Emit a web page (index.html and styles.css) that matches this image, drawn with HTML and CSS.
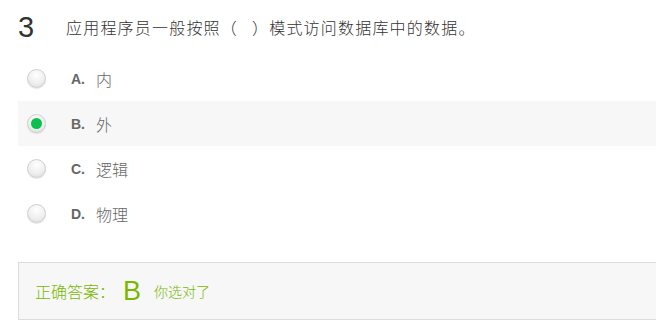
FILE: index.html
```html
<!DOCTYPE html>
<html lang="zh-CN">
<head>
<meta charset="utf-8">
<link rel="stylesheet" href="styles.css">
</head>
<body>
<div class="question">
  <div class="q-head">
    <span class="q-num">3</span>
    <span class="q-text">应用程序员一般按照（<span class="gap"></span>）模式访问数据库中的数据。</span>
  </div>
  <ul class="options">
    <li class="option"><span class="radio"></span><span class="letter">A.</span><span class="opt-text">内</span></li>
    <li class="option selected"><span class="radio checked"></span><span class="letter">B.</span><span class="opt-text">外</span></li>
    <li class="option"><span class="radio"></span><span class="letter">C.</span><span class="opt-text">逻辑</span></li>
    <li class="option"><span class="radio"></span><span class="letter">D.</span><span class="opt-text">物理</span></li>
  </ul>
  <div class="answer">
    <span class="ans-label">正确答案：</span><span class="ans-key">B</span><span class="ans-note">你选对了</span>
  </div>
</div>
</body>
</html>
```
FILE: styles.css
```css
html, body {
  margin: 0;
  padding: 0;
  background: #fff;
}
body {
  font-family: "Noto Sans CJK SC", "Liberation Sans", sans-serif;
  font-weight: 300;
  color: #333;
  width: 656px;
  overflow: hidden;
}
.question {
  padding: 10px 0 0 18px;
}
.q-head {
  display: flex;
  align-items: center;
  height: 34px;
}
.q-num {
  font-family: "Liberation Sans", sans-serif;
  font-weight: normal;
  font-size: 29px;
  color: #333;
  width: 48px;
  line-height: 34px;
}
.q-text {
  font-size: 16px;
  letter-spacing: 1.2px;
  color: #333;
}
.gap {
  display: inline-block;
  width: 14px;
}
.options {
  list-style: none;
  margin: 12px 0 0 0;
  padding: 0;
}
.option {
  display: flex;
  align-items: center;
  height: 45px;
  padding-left: 9px;
}
.option.selected {
  background: #f7f7f7;
}
.radio {
  width: 17px;
  height: 17px;
  border-radius: 50%;
  border: 1px solid #cfcfcf;
  background: radial-gradient(circle at 50% 30%, #ffffff 0%, #eeeeee 60%, #d8d8d8 100%);
  box-shadow: 0 1px 1px rgba(0,0,0,0.1);
  position: relative;
  flex: none;
}
.radio.checked::after {
  content: "";
  position: absolute;
  left: 3px;
  top: 3px;
  width: 11px;
  height: 11px;
  border-radius: 50%;
  background: #0ac14f;
}
.letter {
  font-family: "Liberation Sans", sans-serif;
  font-weight: bold;
  font-size: 14px;
  color: #666;
  margin-left: 25px;
  width: 25px;
}
.opt-text {
  font-size: 16px;
  color: #666;
}
.answer {
  margin-top: 26px;
  height: 56px;
  background: #f7f7f7;
  border: 1px solid #ddd;
  border-right: none;
  display: flex;
  align-items: center;
  padding-left: 16px;
  color: #7ab800;
}
.ans-label {
  font-size: 16px;
}
.ans-key {
  font-family: "Liberation Sans", sans-serif;
  font-weight: normal;
  font-size: 27px;
  margin-left: 8px;
  margin-right: 13px;
}
.ans-note {
  font-size: 14px;
}
```
